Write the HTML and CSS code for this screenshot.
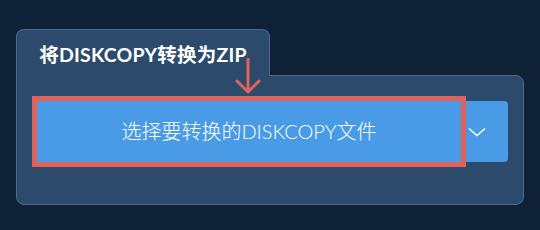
FILE: index.html
```html
<!DOCTYPE html>
<html lang="zh">
<head>
    <meta charset="UTF-8">
    <title>DISKCOPY转ZIP</title>
    <link rel="stylesheet" href="styles.css">
</head>
<body>

    <div class="converter">
        <!-- Tab header -->
        <div class="tab">
            <h2 class="tab-title">将DISKCOPY转换为ZIP</h2>
        </div>

        <!-- Red hint arrow -->
        <svg class="hint-arrow" width="30" height="38" viewBox="0 0 30 38">
            <path d="M14 1 V34 M3 23 L14 34 L25 23" fill="none" stroke="#e0625c" stroke-width="3" stroke-linecap="round" stroke-linejoin="round"/>
        </svg>

        <!-- Panel -->
        <div class="panel">
            <div class="btn-group">
                <button class="btn-main">选择要转换的DISKCOPY文件</button>
                <button class="btn-drop">
                    <svg width="18" height="10" viewBox="0 0 18 10">
                        <path d="M1 1.5 L9 8.5 L17 1.5" fill="none" stroke="#fff" stroke-width="1.4"/>
                    </svg>
                </button>
            </div>
        </div>
    </div>

</body>
</html>
```

FILE: styles.css
```css
body {
    margin: 0;
    background: #0f2137;
    font-family: Lato, "Noto Sans CJK SC", sans-serif;
    color: white;
}

.converter {
    position: relative;
    padding: 29px 16px 0 16px;
    width: 508px;
}

/* Tab header */
.tab {
    position: relative;
    z-index: 1;
    width: 252px;
    height: 46px;
    background: #2c4a6b;
    border: 1px solid #4a6b8e;
    border-bottom: none;
    border-radius: 8px 8px 0 0;
    margin-bottom: -1px;
    display: flex;
    align-items: center;
    justify-content: center;
}

.tab-title {
    margin: 0;
    font-size: 19.5px;
    font-weight: bold;
    letter-spacing: 0.2px;
}

/* Arrow pointing at the button */
.hint-arrow {
    position: absolute;
    left: 234px;
    top: 58px;
    z-index: 2;
}

/* Panel */
.panel {
    background: #2c4a6b;
    border: 1px solid #4a6b8e;
    border-radius: 0 8px 8px 8px;
    padding: 25px 15px 42px 20px;
}

.btn-group {
    display: flex;
    height: 61px;
}

.btn-main {
    position: relative;
    z-index: 1;
    flex: 1;
    background: #4a9be6;
    color: white;
    border: none;
    border-radius: 0;
    outline: 5px solid #e0625c;
    font-family: Lato, "Noto Sans CJK SC", sans-serif;
    font-size: 20px;
    font-weight: 300;
    padding: 0 0 2px 0;
    cursor: pointer;
}

.btn-drop {
    width: 47px;
    background: #4a9be6;
    border: none;
    border-radius: 0 4px 4px 0;
    padding: 0 15px 0 0;
    display: flex;
    align-items: center;
    justify-content: center;
    cursor: pointer;
}
```
